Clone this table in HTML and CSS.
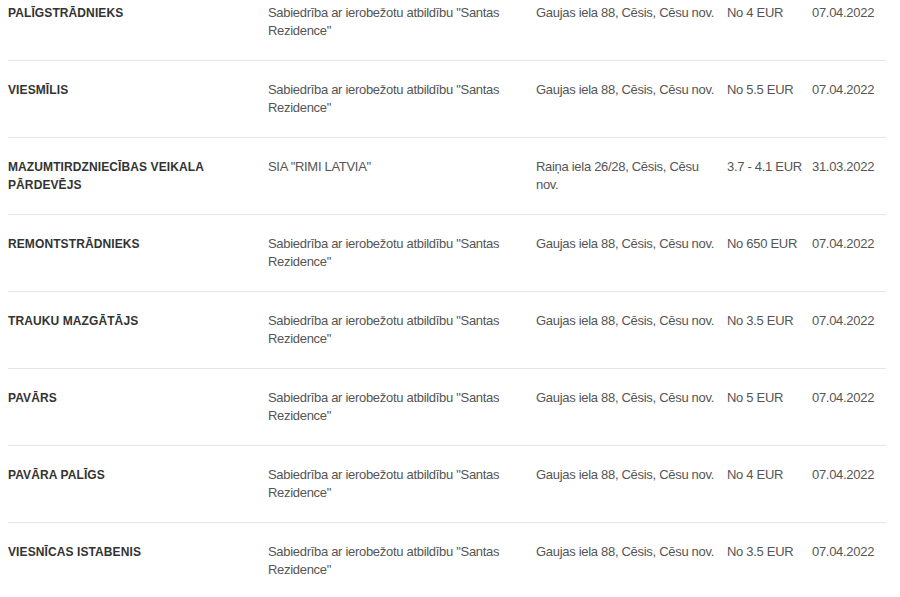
FILE: index.html
```html
<!DOCTYPE html>
<html lang="lv">
<head>
<meta charset="utf-8">
<title>Vakances</title>
<link rel="stylesheet" href="styles.css">
</head>
<body>
<table class="jobs">
  <colgroup>
    <col class="c-title"><col class="c-company"><col class="c-addr"><col class="c-pay"><col class="c-date">
  </colgroup>
  <tbody>
    <tr><td class="title">PALĪGSTRĀDNIEKS</td><td>Sabiedrība ar ierobežotu atbildību "Santas Rezidence"</td><td>Gaujas iela 88, Cēsis, Cēsu nov.</td><td>No 4 EUR</td><td>07.04.2022</td></tr>
    <tr><td class="title">VIESMĪLIS</td><td>Sabiedrība ar ierobežotu atbildību "Santas Rezidence"</td><td>Gaujas iela 88, Cēsis, Cēsu nov.</td><td>No 5.5 EUR</td><td>07.04.2022</td></tr>
    <tr><td class="title">MAZUMTIRDZNIECĪBAS VEIKALA PĀRDEVĒJS</td><td>SIA "RIMI LATVIA"</td><td>Raiņa iela 26/28, Cēsis, Cēsu nov.</td><td>3.7 - 4.1 EUR</td><td>31.03.2022</td></tr>
    <tr><td class="title">REMONTSTRĀDNIEKS</td><td>Sabiedrība ar ierobežotu atbildību "Santas Rezidence"</td><td>Gaujas iela 88, Cēsis, Cēsu nov.</td><td>No 650 EUR</td><td>07.04.2022</td></tr>
    <tr><td class="title">TRAUKU MAZGĀTĀJS</td><td>Sabiedrība ar ierobežotu atbildību "Santas Rezidence"</td><td>Gaujas iela 88, Cēsis, Cēsu nov.</td><td>No 3.5 EUR</td><td>07.04.2022</td></tr>
    <tr><td class="title">PAVĀRS</td><td>Sabiedrība ar ierobežotu atbildību "Santas Rezidence"</td><td>Gaujas iela 88, Cēsis, Cēsu nov.</td><td>No 5 EUR</td><td>07.04.2022</td></tr>
    <tr><td class="title">PAVĀRA PALĪGS</td><td>Sabiedrība ar ierobežotu atbildību "Santas Rezidence"</td><td>Gaujas iela 88, Cēsis, Cēsu nov.</td><td>No 4 EUR</td><td>07.04.2022</td></tr>
    <tr><td class="title">VIESNĪCAS ISTABENIS</td><td>Sabiedrība ar ierobežotu atbildību "Santas Rezidence"</td><td>Gaujas iela 88, Cēsis, Cēsu nov.</td><td>No 3.5 EUR</td><td>07.04.2022</td></tr>
  </tbody>
</table>
</body>
</html>
```
FILE: styles.css
```css
html, body {
  margin: 0;
  padding: 0;
  background: #fff;
}
body {
  font-family: "Liberation Sans", Arial, sans-serif;
  font-size: 13px;
  line-height: 18px;
  letter-spacing: -0.3px;
  color: #555;
  overflow: hidden;
}
.jobs {
  border-collapse: collapse;
  table-layout: fixed;
  width: 878px;
  margin: -16px 0 0 8px;
}
.c-title { width: 260px; }
.c-company { width: 268px; }
.c-addr { width: 191px; }
.c-pay { width: 85px; }
.c-date { width: 74px; }
.jobs td {
  vertical-align: top;
  padding: 20px 8px 20px 0;
  border-bottom: 1px solid #e6e6e6;
}
.jobs td:nth-child(2) { padding-right: 12px; }
.jobs td:last-child { padding-right: 0; }
.jobs td.title {
  font-weight: bold;
  font-size: 12px;
  letter-spacing: 0.1px;
  color: #333;
  padding-right: 40px;
}
```
